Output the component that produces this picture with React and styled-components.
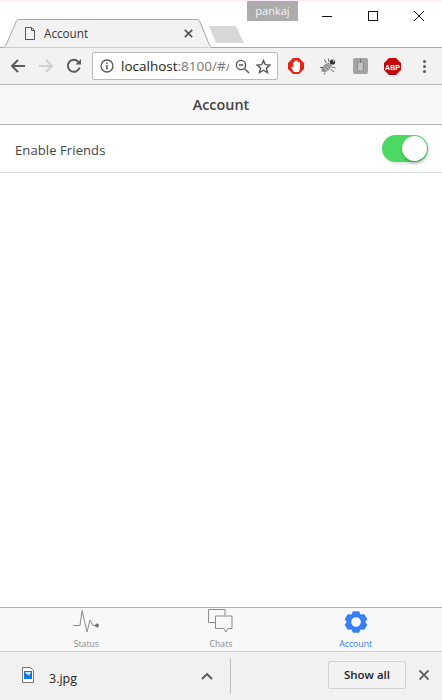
import React from "react"
import styled, { createGlobalStyle } from "styled-components"

// six wide teeth, same outline as the ionic settings icon
function gearPath(cx, cy) {
  let d = ""
  for (let i = 0; i < 6; i++) {
    const a = (i * Math.PI) / 3
    const pts = [[-30, 8.6], [-15, 11], [15, 11], [30, 8.6]]
    pts.forEach(([off, r], j) => {
      const t = a + (off * Math.PI) / 180
      const x = cx + Math.sin(t) * r * 1.07
      const y = cy - Math.cos(t) * r
      d += `${i === 0 && j === 0 ? "M" : "L"}${x.toFixed(2)} ${y.toFixed(2)}`
    })
  }
  d += `Z M${cx - 4.8} ${cy}a4.8 4.8 0 1 0 9.6 0a4.8 4.8 0 1 0 -9.6 0Z`
  return d
}

const GlobalStyle = createGlobalStyle`
html, body { margin: 0; padding: 0; height: 100%; background: #fff; }
body { font-family: "Open Sans", "Noto Sans", sans-serif; overflow: hidden; }
#root { height: 700px; }
`

export default function App() {
  return (
    <Page>
      <GlobalStyle />
      <TitleBar>
        <Tab>
          <TabShape viewBox="0 0 214 29" aria-hidden="true">
            <path d="M2 28.5 C4 28.5 5.500 27.500 6.500 25 L16 3 C16.700 1.300 17.500 .5 19 .5 H197 C198.500 .5 199.400 1.300 200 3 L209 25 C210 27.500 211 28.500 213 28.500" fill="#f2f2f2" stroke="#a8a8a8" />
          </TabShape>
          <PageIcon viewBox="0 0 10 13"><path d="M.5.5H6.500L9.500 3.500V12.500H.5ZM6.500.5V3.500H9.500" fill="none" stroke="#555" /></PageIcon>
          <TabTitle>Account</TabTitle>
          <TabClose viewBox="0 0 9 9"><path d="M.8.8 8.200 8.200M8.200.8.8 8.200" stroke="#555" strokeWidth="1.700" /></TabClose>
        </Tab>
        <NewTab />
        <Profile>pankaj</Profile>
        <WindowButtons>
          <WindowButton><svg width="10" height="10" viewBox="0 0 10 10"><path d="M0 5.500H10" stroke="#111" /></svg></WindowButton>
          <WindowButton><svg width="10" height="10" viewBox="0 0 10 10"><rect x=".5" y=".5" width="9" height="9" fill="none" stroke="#111" /></svg></WindowButton>
          <WindowButton><svg width="10" height="10" viewBox="0 0 10 10"><path d="M0 0 10 10M10 0 0 10" stroke="#111" /></svg></WindowButton>
        </WindowButtons>
      </TitleBar>

      <Toolbar>
        <NavIcon viewBox="0 0 16 16"><path d="M15 8H2M8 2 2 8l6 6" fill="none" stroke="#5a5a5a" strokeWidth="2" /></NavIcon>
        <NavIcon viewBox="0 0 16 16"><path d="M1 8H14M8 2l6 6-6 6" fill="none" stroke="#d0d0d0" strokeWidth="2" /></NavIcon>
        <NavIcon viewBox="0 0 16 16"><path d="M13.600 9.500A6 6 0 1 1 12.300 3.800" fill="none" stroke="#5a5a5a" strokeWidth="2" /><path d="M9.500 6.500H15V1Z" fill="#5a5a5a" /></NavIcon>
        <Omnibox>
          <svg width="14" height="14" viewBox="0 0 14 14"><circle cx="7" cy="7" r="6" fill="none" stroke="#555" strokeWidth="1.300" /><path d="M7 6v4.400M7 3.400v1.500" stroke="#555" strokeWidth="1.500" /></svg>
          <Url>localhost<UrlRest>:8100/#/</UrlRest></Url>
          <svg width="15" height="15" viewBox="0 0 15 15"><circle cx="6" cy="6" r="4.600" fill="none" stroke="#555" strokeWidth="1.400" /><path d="M3.800 6H8.200M9.500 9.500 14 14" stroke="#555" strokeWidth="1.400" /></svg>
          <svg width="15" height="15" viewBox="0 0 15 15"><path d="M7.500 1.500 9.300 5.700 13.900 6.100 10.400 9.100 11.500 13.600 7.500 11.200 3.500 13.600 4.600 9.100 1.100 6.100 5.700 5.700Z" fill="none" stroke="#555" strokeWidth="1.400" /></svg>
        </Omnibox>
        <Extensions>
          <ExtSlot>
            <svg width="16" height="16" viewBox="0 0 16 16"><path d="M5 0h6l5 5v6l-5 5H5L0 11V5Z" fill="#e2231a" /><path d="M5.800 14 3 9.300l1-.9 1.300 1.300V4.200h1.100V3h1.200V2.400h1.200V3.300h1.200v1H12v6l-1 3.700Z" fill="#fff" /></svg>
          </ExtSlot>
          <ExtSlot>
            <svg width="18" height="17" viewBox="0 0 18 17"><path d="M2.500 13.500C1.800 10 4.500 6.500 9.500 4.500L13 7.800C11 12.500 7 15 2.500 13.500Z" fill="#8a8a8a" /><path d="M4 8.500l4.800 5M6 6.800l5 5M8 5.300l4 4.200" stroke="#e8e8e8" strokeWidth=".8" /><circle cx="13.500" cy="4" r="2.600" fill="#2e2e2e" /><circle cx="14.500" cy="3" r=".8" fill="#fff" /><path d="M7 5 5.500 1.500M10 4 9.500 .5M13 9l3.500 1M12 11.500 15 14M1 9.500 4 9.500M6 14.500 5.500 16.500" stroke="#555" strokeWidth=".9" /></svg>
          </ExtSlot>
          <ExtSlot>
            <svg width="15" height="16" viewBox="0 0 15 16"><rect width="15" height="16" rx="2" fill="#a4a4a4" /><rect x="4.500" y="3.500" width="6" height="10" rx="3" fill="#c4c4c4" stroke="#8a8a8a" /><path d="M7.500 1v4" stroke="#777" /></svg>
          </ExtSlot>
          <ExtSlot>
            <AbpIcon viewBox="0 0 17 17"><path d="M5 0h7l5 5v7l-5 5H5L0 12V5Z" fill="#c8070b" /><text x="8.500" y="11.500" textAnchor="middle">ABP</text></AbpIcon>
          </ExtSlot>
          <ExtSlot>
            <MenuDots><i /><i /><i /></MenuDots>
          </ExtSlot>
        </Extensions>
      </Toolbar>

      <AppHeader>Account</AppHeader>

      <Content>
        <SettingRow>
          <SettingLabel>Enable Friends</SettingLabel>
          <Toggle><Knob /></Toggle>
        </SettingRow>
      </Content>

      <TabBar>
        <TabButton>
          <svg width="26" height="24" viewBox="0 0 26 24"><path d="M0 16.500H7L9 1.500 14 23 17 11 20 16.500H24" fill="none" stroke="#8c8c8c" /><circle cx="24" cy="16.500" r="2" fill="#777" /></svg>
          <TabLabel>Status</TabLabel>
        </TabButton>
        <TabButton>
          <svg width="25" height="24" viewBox="0 0 25 24"><path d="M8 13.500H.5V.5H17V6.500" fill="none" stroke="#8c8c8c" /><path d="M7.500 7H24V19.500H20L18 23 16 19.500H7.500Z" fill="none" stroke="#8c8c8c" /></svg>
          <TabLabel>Chats</TabLabel>
        </TabButton>
        <TabButton>
          <svg width="24" height="24" viewBox="0 0 24 24"><path d={gearPath(12, 13)} fill="#387ef5" fillRule="evenodd" /></svg>
          <TabLabel $active>Account</TabLabel>
        </TabButton>
      </TabBar>

      <DownloadShelf>
        <DownloadItem>
          <svg width="12" height="16" viewBox="0 0 12 16"><path d="M.5.5H8.500L11.500 3.500V15.500H.5Z" fill="#fff" stroke="#777" /><rect x="2" y="4" width="8" height="8" fill="#0a78d8" /><path d="M3 5h6L7 9 6 7 5 8Z" fill="#cfe6fb" /></svg>
          <FileName>3.jpg</FileName>
          <Chevron width="12" height="8" viewBox="0 0 12 8"><path d="M1 7 6 2l5 5" fill="none" stroke="#555" strokeWidth="1.800" /></Chevron>
        </DownloadItem>
        <Divider />
        <ShowAll>Show all</ShowAll>
        <ShelfClose viewBox="0 0 10 10"><path d="M.5.500 9.500 9.500M9.500.500.5 9.500" stroke="#5a5a5a" strokeWidth="1.800" /></ShelfClose>
      </DownloadShelf>
    </Page>
  )
}

const Page = styled.div`
display: flex;
flex-direction: column;
width: 442px;
height: 700px;
overflow: hidden;
`

const TitleBar = styled.div`
display: flex;
align-items: flex-end;
height: 48px;
flex-shrink: 0;
box-sizing: border-box;
border-top: 1px solid #fbeafb;
border-bottom: 1px solid #a8a8a8;
background: #fff;
position: relative;
`

const Tab = styled.div`
position: relative;
display: flex;
align-items: center;
width: 208px;
height: 28px;
box-sizing: border-box;
padding: 0 15px 0 25px;
`

const TabShape = styled.svg`
position: absolute;
left: 0;
top: 0;
width: 214px;
height: 29px;
overflow: visible;
`

const PageIcon = styled.svg`
position: relative;
width: 10px;
height: 13px;
margin-right: 9px;
`

const TabTitle = styled.span`
position: relative;
flex: 1;
font-size: 11.7px;
color: #333;
`

const TabClose = styled.svg`
position: relative;
width: 9px;
height: 9px;
`

const NewTab = styled.div`
width: 35px;
height: 17px;
margin: 0 0 4px 1px;
background: #d8d8d8;
clip-path: polygon(0 0, 77% 0, 100% 100%, 20% 100%);
`

const Profile = styled.div`
position: absolute;
top: 0;
left: 247px;
width: 51px;
height: 20px;
background: #acacac;
color: #f4f4f4;
font-size: 11px;
line-height: 20px;
text-align: center;
`

const WindowButtons = styled.div`
position: absolute;
top: 0;
right: 0;
display: flex;
`

const WindowButton = styled.div`
display: flex;
align-items: center;
justify-content: center;
width: 46px;
height: 29px;
`

const Toolbar = styled.div`
display: flex;
align-items: center;
height: 37px;
flex-shrink: 0;
padding-left: 10px;
box-sizing: border-box;
background: #f2f2f2;
border-bottom: 1px solid #b4b4b4;
`

const NavIcon = styled.svg`
width: 16px;
height: 16px;
margin-right: 12px;
`

const Omnibox = styled.div`
display: flex;
align-items: center;
gap: 6px;
width: 186px;
height: 28px;
margin-left: -2px;
padding: 0 6px 0 7px;
box-sizing: border-box;
background: #fff;
border: 1px solid #b9b9b9;
border-radius: 2px;
`

const Url = styled.span`
flex: 1;
min-width: 0;
margin-left: 1px;
overflow: hidden;
white-space: nowrap;
font-size: 13.5px;
color: #222;
`

const UrlRest = styled.span`
color: #777;
`

const Extensions = styled.div`
display: grid;
grid-template-columns: repeat(5, 32px);
padding-left: 2px;
`

const ExtSlot = styled.div`
display: flex;
align-items: center;
justify-content: center;
height: 20px;
`

const AbpIcon = styled.svg`
width: 17px;
height: 17px;
text {
  font-family: "Liberation Sans", sans-serif;
  font-size: 7px;
  font-weight: 700;
  fill: #fff;
}
`

const MenuDots = styled.div`
display: flex;
flex-direction: column;
gap: 2px;
i {
  width: 3px;
  height: 3px;
  border-radius: 50%;
  background: #5a5a5a;
}
`

const AppHeader = styled.div`
display: flex;
align-items: center;
justify-content: center;
height: 40px;
flex-shrink: 0;
box-sizing: border-box;
background: #f8f8f8;
border-bottom: 1px solid #b2b2b2;
font-size: 14.4px;
font-weight: 600;
color: #444;
`

const Content = styled.div`
flex: 1;
background: #fff;
`

const SettingRow = styled.div`
display: flex;
align-items: center;
justify-content: space-between;
height: 48px;
box-sizing: border-box;
padding: 0 14px 0 15px;
border-bottom: 1px solid #dedede;
`

const SettingLabel = styled.span`
margin-top: 2px;
font-size: 13px;
color: #444;
letter-spacing: .1px;
`

const Toggle = styled.div`
display: flex;
justify-content: flex-end;
align-items: center;
width: 46px;
height: 27px;
box-sizing: border-box;
padding-right: 1px;
border-radius: 14px;
background: #4cd964;
box-shadow: 1px 2px 3px rgba(0,0,0,.12);
`

const Knob = styled.div`
width: 25px;
height: 25px;
border-radius: 50%;
background: #fff;
box-shadow: 0 2px 3px rgba(0,0,0,.25);
`

const TabBar = styled.div`
display: grid;
grid-template-columns: repeat(3, 1fr);
height: 45px;
flex-shrink: 0;
box-sizing: border-box;
padding: 0 19px;
background: #f8f8f8;
border-top: 1px solid #b2b2b2;
border-bottom: 1px solid #d0d0d0;
`

const TabButton = styled.div`
display: flex;
flex-direction: column;
align-items: center;
padding-top: 1px;
gap: 6px;
`

const TabLabel = styled.span`
font-size: 8.7px;
line-height: 11px;
color: ${({ $active }) => ($active ? "#387ef5" : "#8c8c8c")};
`

const DownloadShelf = styled.div`
display: flex;
align-items: center;
flex: 0 0 48px;
box-sizing: border-box;
padding-bottom: 2px;
background: #f1f1f1;
`

const DownloadItem = styled.div`
display: flex;
align-items: center;
width: 213px;
box-sizing: border-box;
padding-left: 22px;
`

const Chevron = styled.svg`
margin-left: auto;
margin-top: 2px;
`

const FileName = styled.span`
margin: 6px 0 0 15px;
font-size: 12.5px;
color: #222;
`

const Divider = styled.div`
width: 1px;
height: 36px;
margin: 2px 0 0 17px;
background: #bdbdbd;
`

const ShowAll = styled.div`
display: flex;
align-items: center;
justify-content: center;
width: 78px;
height: 28px;
margin-left: 97px;
padding-bottom: 2px;
box-sizing: border-box;
background: #f2f2f2;
border: 1px solid #d2d2d2;
border-radius: 2px;
font-size: 11.5px;
font-weight: 600;
color: #222;
`

const ShelfClose = styled.svg`
width: 10px;
height: 10px;
margin-left: 13px;
`
